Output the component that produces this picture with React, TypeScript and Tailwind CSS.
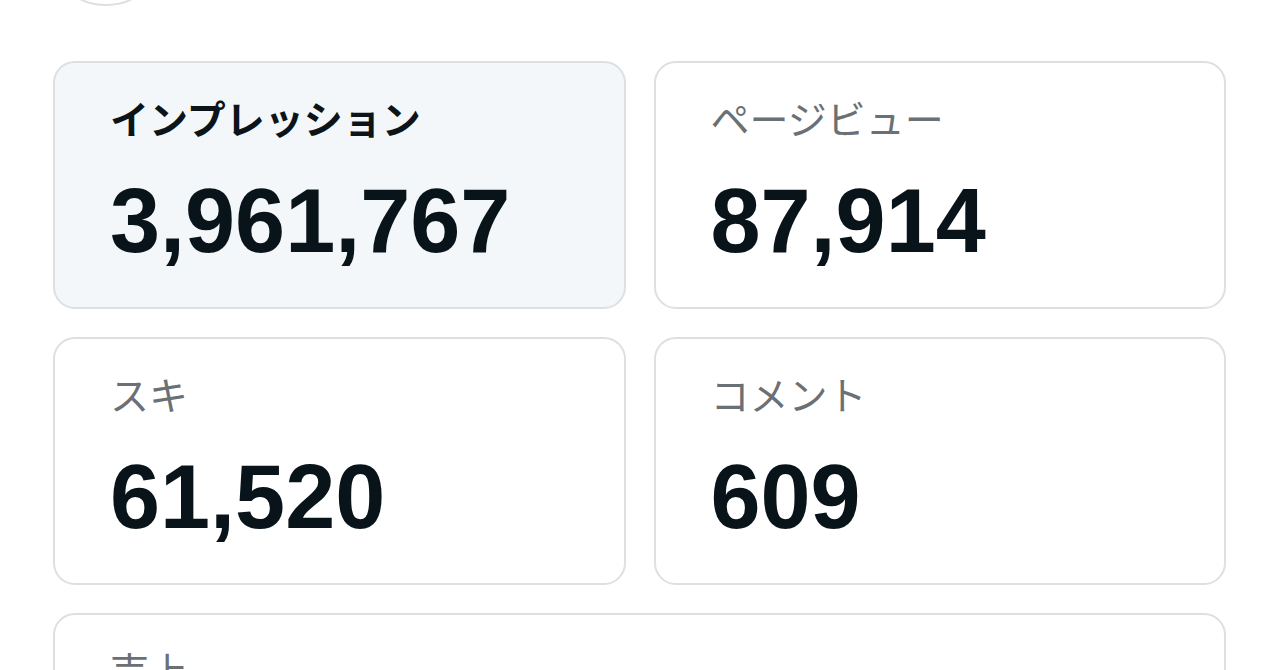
const stats = [
  { label: "インプレッション", value: "3,961,767", active: true },
  { label: "ページビュー", value: "87,914" },
  { label: "スキ", value: "61,520" },
  { label: "コメント", value: "609" },
];

function StatCard({ label, value, active }: { label: string; value: string; active?: boolean }) {
  return (
    <div
      className={`h-[248px] rounded-[22px] border-2 border-[#dedfe0] px-[55px] pt-[26px] ${
        active ? "bg-[#f4f7f9]" : "bg-white"
      }`}
    >
      <div
        className={`text-[39px] leading-[56px] ${
          active ? "font-bold text-[#0b1419]" : "font-normal text-[#6b7075]"
        }`}
        style={{ fontFamily: '"Noto Sans CJK JP", sans-serif' }}
      >
        {label}
      </div>
      <div
        className="mt-[31px] text-[90px] font-bold leading-[90px] text-[#08131a]"
        style={{ fontFamily: '"Liberation Sans", Arial, sans-serif' }}
      >
        {value}
      </div>
    </div>
  );
}

export default function App() {
  return (
    <div className="h-[670px] overflow-hidden bg-white" style={{ fontFamily: '"Noto Sans CJK JP", sans-serif' }}>
      <div className="-mt-[114px] ml-[46px] h-[120px] w-[120px] rounded-full border-2 border-[#dedfe0]" />
      <div className="mt-[55px] grid grid-cols-2 gap-[28px] pl-[53px] pr-[54px]">
        {stats.map((s) => (
          <StatCard key={s.label} {...s} />
        ))}
        <div className="col-span-2 h-[248px] rounded-[22px] border-2 border-[#dedfe0] px-[55px] pt-[26px]">
          <div className="text-[39px] leading-[56px] text-[#6b7075]">売上</div>
        </div>
      </div>
    </div>
  );
}
